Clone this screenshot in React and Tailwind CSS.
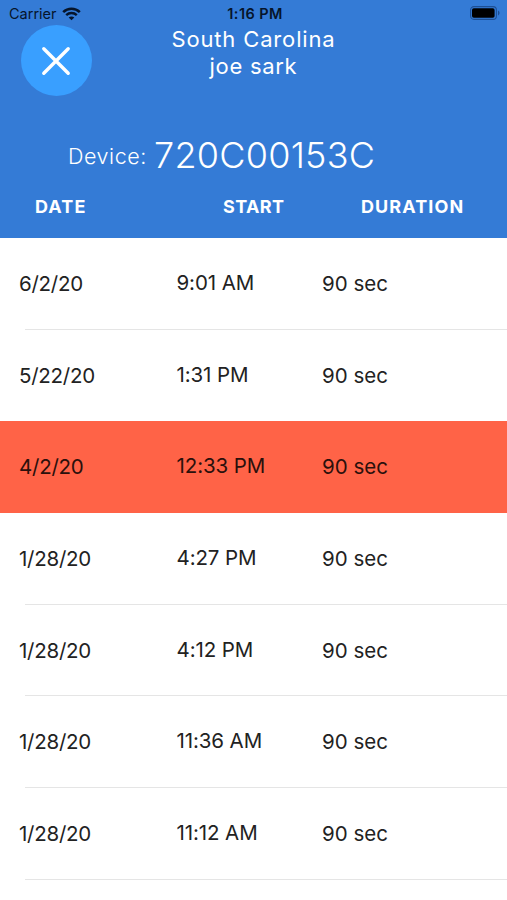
import React from "react";
import clsx from "clsx";

const readings = [
    { date: "6/2/20", start: "9:01 AM", duration: "90 sec" },
    { date: "5/22/20", start: "1:31 PM", duration: "90 sec" },
    { date: "4/2/20", start: "12:33 PM", duration: "90 sec", alert: true },
    { date: "1/28/20", start: "4:27 PM", duration: "90 sec" },
    { date: "1/28/20", start: "4:12 PM", duration: "90 sec" },
    { date: "1/28/20", start: "11:36 AM", duration: "90 sec" },
    { date: "1/28/20", start: "11:12 AM", duration: "90 sec" },
];

function WifiIcon() {
    return (
        <svg width="19" height="14" viewBox="0 0 19 14" fill="none">
            <path
                d="M1.2 5.1C5.9.6 13.1.6 17.8 5.1"
                stroke="currentColor"
                strokeWidth="2.6"
            />
            <path
                d="M4.2 8.1C7.2 5.3 11.8 5.3 14.8 8.1"
                stroke="currentColor"
                strokeWidth="2.4"
            />
            <path
                d="M9.5 13.3 6.7 10.5C8.3 9.1 10.7 9.1 12.3 10.5Z"
                fill="currentColor"
            />
        </svg>
    );
}

function BatteryIcon() {
    return (
        <svg width="31" height="14" viewBox="0 0 31 14" fill="none">
            <rect
                x="0.6"
                y="0.6"
                width="25.8"
                height="12.8"
                rx="3.4"
                stroke="#1d4f94"
                strokeWidth="1.1"
            />
            <rect x="2" y="2.2" width="22.6" height="9.6" rx="1.8" fill="#000" />
            <path d="M28 4.6v4.8c2-.8 2-4 0-4.8Z" fill="#1d4f94" />
        </svg>
    );
}

function StatusBar() {
    return (
        <div className="grid h-[27px] grid-cols-[1fr_auto_1fr] items-center pr-[6px] pl-[9px] text-[14.5px] leading-none text-[#06152b]">
            <div className="flex items-center gap-[5px]">
                <span className="pt-[2px]">Carrier</span>
                <WifiIcon />
            </div>
            <span className="pt-[2px] font-semibold tracking-[0.4px]">
                1:16 PM
            </span>
            <div className="flex justify-end pb-px">
                <BatteryIcon />
            </div>
        </div>
    );
}

function ReadingRow({ reading, nextAlert }) {
    return (
        <div
            className={clsx(
                "h-[91.67px] text-[20.5px] leading-[91px]",
                reading.alert ? "bg-[#ff6347] text-[#2b100c]" : "text-[#222]",
            )}
        >
            <div
                className={clsx(
                    "ml-[25px] h-full border-b",
                    reading.alert || nextAlert
                        ? "border-transparent"
                        : "border-[#e5e5e5]",
                )}
            >
                <div className="-ml-[6px] grid grid-cols-[157.5px_145.5px_1fr]">
                    <span className="tracking-[-0.25px]">{reading.date}</span>
                    <span className="-mt-px tracking-[-0.1px]">
                        {reading.start}
                    </span>
                    <span>{reading.duration}</span>
                </div>
            </div>
        </div>
    );
}

export default function App() {
    return (
        <div className="h-[900px] w-[507px] overflow-hidden bg-white font-['Inter',sans-serif]">
            <header className="h-[238px] bg-[#347bd6] text-white">
                <StatusBar />
                <div className="grid h-[98px] grid-cols-[91px_1fr_91px]">
                    <button className="-mt-[2px] ml-[20.5px] flex size-[71px] items-center justify-center rounded-full bg-[#399fff]">
                        <svg
                            width="30"
                            height="30"
                            viewBox="0 0 30 30"
                            stroke="currentColor"
                            strokeWidth="3.4"
                            strokeLinecap="round"
                        >
                            <path d="M2.8 2.8 27.2 27.2M27.2 2.8 2.8 27.2" />
                        </svg>
                    </button>
                    <div className="-mt-[1px] text-center text-[22px] leading-[27px]">
                        <div className="tracking-[0.85px]">South Carolina</div>
                        <div className="tracking-[0.7px]">joe sark</div>
                    </div>
                </div>
                <div className="flex h-[60px] items-center pl-[68px] font-light">
                    <span className="w-[86px] pt-[2px] text-[21.5px] leading-[60px] tracking-[0.55px]">
                        Device:
                    </span>
                    <span className="text-[36px] leading-[60px] tracking-[0.25px]">
                        720C00153C
                    </span>
                </div>
                <div className="grid grid-cols-[188px_138px_1fr] pt-[10px] pl-[35px] text-[18px] leading-[24px] font-bold">
                    <span className="tracking-[1.1px]">DATE</span>
                    <span className="tracking-[0.4px]">START</span>
                    <span className="tracking-[1.1px]">DURATION</span>
                </div>
            </header>
            <main>
                {readings.map((reading, i) => (
                    <ReadingRow
                        key={i}
                        reading={reading}
                        nextAlert={readings[i + 1]?.alert}
                    />
                ))}
            </main>
        </div>
    );
}
